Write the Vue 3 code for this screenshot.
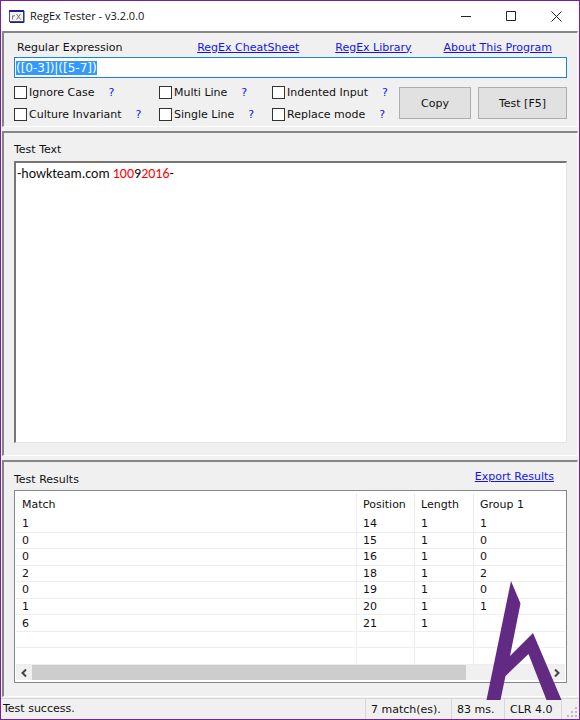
<template>
  <div class="window">
    <header class="title-bar">
      <svg class="app-icon" width="16" height="13" viewBox="0 0 16 13">
        <rect x="0.5" y="0.5" width="14" height="11" fill="#f3f1ec" stroke="#4a4a8c" />
        <path d="M0 0h15v2h-15z" fill="#1c1c9c" />
        <path d="M15 1v11.500H1" fill="none" stroke="#24246e" />
        <path d="M3.500 9.500V5.500M3.500 6.500L6 5.500M7.500 4l4 5.500M11.500 4l-4 5.500" fill="none" stroke="#77777f" />
      </svg>
      <h1 class="title">RegEx Tester - v3.2.0.0</h1>
      <div class="window-controls">
        <button type="button" aria-label="Minimize">
          <svg width="11" height="11" viewBox="0 0 11 11"><path d="M0 5.5h10" /></svg>
        </button>
        <button type="button" aria-label="Maximize">
          <svg width="11" height="11" viewBox="0 0 11 11"><path d="M0.5 0.5h9v9h-9z" /></svg>
        </button>
        <button type="button" aria-label="Close">
          <svg width="11" height="11" viewBox="0 0 11 11"><path d="M0.5 0.5l10 10M10.5 0.5l-10 10" /></svg>
        </button>
      </div>
    </header>

    <section class="panel">
      <div class="expression-head">
        <label for="regex">Regular Expression</label>
        <nav class="links">
          <a href="#cheatsheet">RegEx CheatSheet</a>
          <a href="#library">RegEx Library</a>
          <a href="#about">About This Program</a>
        </nav>
      </div>
      <input id="regex" ref="regexInput" v-model="regex" class="regex-input" type="text" spellcheck="false" />
      <div class="controls">
        <div class="options">
          <div v-for="option in options" :key="option.id" class="option">
            <input :id="option.id" v-model="option.checked" type="checkbox" />
            <label :for="option.id">{{ option.label }}</label>
            <a class="help" :href="'#help-' + option.id">?</a>
          </div>
        </div>
        <button type="button" class="btn">Copy</button>
        <button type="button" class="btn btn-test">Test [F5]</button>
      </div>
    </section>

    <section class="panel panel-text">
      <h2 id="text-label" class="caption">Test Text</h2>
      <div class="test-text" contenteditable="true" role="textbox" aria-multiline="true" aria-labelledby="text-label" spellcheck="false"><span v-for="(part, i) in testText" :key="i" :class="{ hit: part.hit }">{{ part.text }}</span></div>
    </section>

    <section class="panel panel-results">
      <div class="results-head">
        <h2 class="caption">Test Results</h2>
        <a href="#export">Export Results</a>
      </div>
      <div class="list-view">
        <table>
          <colgroup>
            <col />
            <col class="col-position" />
            <col class="col-length" />
            <col class="col-group" />
          </colgroup>
          <thead>
            <tr>
              <th>Match</th>
              <th>Position</th>
              <th>Length</th>
              <th>Group 1</th>
            </tr>
          </thead>
          <tbody>
            <tr v-for="(row, i) in results" :key="i">
              <td v-for="(cell, j) in row" :key="j">{{ cell }}</td>
            </tr>
          </tbody>
        </table>
        <div class="scrollbar">
          <button type="button" aria-label="Scroll left">
            <svg width="6" height="8" viewBox="0 0 6 8"><path d="M5 0.5L1.5 4L5 7.5" /></svg>
          </button>
          <div class="track"><div class="thumb"></div></div>
          <button type="button" aria-label="Scroll right">
            <svg width="6" height="8" viewBox="0 0 6 8"><path d="M1 0.5L4.5 4L1 7.5" /></svg>
          </button>
        </div>
      </div>
    </section>

    <footer class="status-bar">
      <span class="status-message">Test success.</span>
      <span class="status-cell cell-matches">7 match(es).</span>
      <span class="status-cell cell-time">83 ms.</span>
      <span class="status-cell cell-clr">CLR 4.0</span>
      <svg class="grip" width="12" height="12" viewBox="0 0 12 12">
        <path d="M9 1h2v2h-2zM5 5h2v2h-2zM9 5h2v2h-2zM1 9h2v2h-2zM5 9h2v2h-2zM9 9h2v2h-2z" fill="#bdbdbd" />
      </svg>
    </footer>

    <svg class="watermark" width="76" height="119" viewBox="0 0 76 119">
      <path d="M25 0L34.500 22.500L24 75L47 52L75.500 119H60.500L42.500 73L19.500 95L14.500 119H0.500Z" fill="#632a83" />
    </svg>
  </div>
</template>

<script setup>
import { ref, onMounted } from 'vue';

const regex = ref('([0-3])|([5-7])');
const regexInput = ref(null);

const options = ref([
  { id: 'ignore-case', label: 'Ignore Case', checked: false },
  { id: 'multi-line', label: 'Multi Line', checked: false },
  { id: 'indented-input', label: 'Indented Input', checked: false },
  { id: 'culture-invariant', label: 'Culture Invariant', checked: false },
  { id: 'single-line', label: 'Single Line', checked: false },
  { id: 'replace-mode', label: 'Replace mode', checked: false }
]);

const testText = [
  { text: '-howkteam.com ', hit: false },
  { text: '100', hit: true },
  { text: '9', hit: false },
  { text: '2016', hit: true },
  { text: '-', hit: false }
];

const results = [
  ['1', '14', '1', '1'],
  ['0', '15', '1', '0'],
  ['0', '16', '1', '0'],
  ['2', '18', '1', '2'],
  ['0', '19', '1', '0'],
  ['1', '20', '1', '1'],
  ['6', '21', '1', ''],
  ['', '', '', ''],
  ['', '', '', '']
];

onMounted(() => {
  regexInput.value.focus();
  regexInput.value.select();
});
</script>

<style>
body {
  margin: 0;
}
</style>

<style scoped>
.window {
  position: relative;
  box-sizing: border-box;
  min-height: 100vh;
  display: flex;
  flex-direction: column;
  border: 1px solid #7a1fa2;
  background: #f0f0f0;
  color: #111;
  font: 11px/16px Verdana, "DejaVu Sans", sans-serif;
}

button,
input {
  font: inherit;
  color: inherit;
}

a {
  color: #1414f0;
}

.title-bar {
  display: flex;
  align-items: center;
  height: 30px;
  padding-left: 8px;
  background: #fff;
}

.title {
  flex: 1;
  margin: 0 0 0 5px;
  font: 11px/16px "Segoe UI", "Open Sans", sans-serif;
}

.window-controls {
  display: flex;
}

.window-controls button {
  display: flex;
  align-items: center;
  justify-content: center;
  width: 45px;
  height: 28px;
  padding: 0;
  border: none;
  background: none;
}

.window-controls path {
  fill: none;
  stroke: #222;
}

.panel {
  display: flex;
  flex-direction: column;
  margin: 0 1px;
  padding: 0 10px;
  border: 1px solid #fff;
  border-top: 2px solid #868686;
  border-left: 2px solid #868686;
}

.expression-head {
  display: flex;
  align-items: center;
  justify-content: space-between;
  padding: 6px 15px 1px 3px;
}

.expression-head label {
  padding-top: 1px;
}

.links {
  display: flex;
  gap: 32px;
}

.links a:first-child {
  margin-right: 4px;
}

.regex-input {
  box-sizing: border-box;
  width: 100%;
  height: 21px;
  padding: 0 1px;
  border: 1px solid #1a84d8;
  outline: none;
  background: #fff;
  font-size: 12px;
}

.regex-input::selection {
  background: #3399ff;
  color: #fff;
}

.controls {
  display: flex;
  align-items: center;
  gap: 7px;
  padding: 3px 0 1px;
}

.options {
  flex: 1;
  display: grid;
  grid-template-columns: 145fr 113fr 120fr;
}

.option {
  display: flex;
  align-items: center;
  height: 22px;
  white-space: nowrap;
}

.option label,
.help {
  padding-top: 2px;
}

.option input {
  appearance: none;
  box-sizing: border-box;
  width: 13px;
  height: 13px;
  margin: 0 2px 0 0;
  border: 1px solid #333;
  background: #fff;
}

.option input:checked {
  box-shadow: inset 0 0 0 2px #fff;
  background: #333;
}

.help {
  margin-left: 14px;
  text-decoration: none;
}

.btn {
  box-sizing: border-box;
  width: 72px;
  height: 32px;
  padding: 2px 0 0;
  border: 1px solid #adadad;
  background: #e1e1e1;
}

.btn-test {
  width: 89px;
}

.panel-text {
  flex: 1;
  margin-top: 4px;
  padding-bottom: 12px;
}

.caption {
  margin: 0;
  font: inherit;
}

.panel-text .caption {
  padding: 9px 0 3px;
}

.test-text {
  flex: 1;
  padding: 2px 1px;
  border: 1px solid #e3e3e3;
  border-top: 2px solid #767676;
  border-left: 2px solid #767676;
  outline: none;
  background: #fff;
  font: 14px/18px Calibri, Carlito, "Open Sans", sans-serif;
  white-space: pre-wrap;
}

.hit {
  color: #f00;
}

.panel-results {
  margin-top: 4px;
  padding-bottom: 13px;
}

.results-head {
  display: flex;
  justify-content: space-between;
  padding: 7px 13px 2px 0;
}

.results-head .caption {
  padding-top: 3px;
}

.list-view {
  padding: 2px 1px;
  border: 1px solid #828790;
  background: #fff;
}

table {
  width: 100%;
  height: 172px;
  border-collapse: separate;
  border-spacing: 0;
  table-layout: fixed;
}

.col-position {
  width: 58px;
}

.col-length {
  width: 59px;
}

.col-group {
  width: 91px;
}

th,
td {
  height: 14px;
  padding: 1px 0 0 6px;
  border-right: 1px solid #ededed;
  line-height: 14px;
  text-align: left;
  font-weight: normal;
}

th {
  height: 21px;
  padding-bottom: 1px;
}

td {
  border-bottom: 1px solid #ededed;
}

th:last-child,
td:last-child {
  border-right: none;
}

.scrollbar {
  display: flex;
  background: #f0f0f0;
}

.scrollbar button {
  display: flex;
  align-items: center;
  justify-content: center;
  width: 16px;
  height: 15px;
  padding: 0;
  border: none;
  background: none;
}

.scrollbar path {
  fill: none;
  stroke: #444;
  stroke-width: 2;
}

.track {
  flex: 1;
}

.thumb {
  width: 84%;
  height: 100%;
  background: #cdcdcd;
}

.status-bar {
  display: flex;
  align-items: center;
  height: 20px;
  margin-top: 1px;
  padding-left: 2px;
  border-top: 1px solid #d7d7d7;
}

.status-message {
  flex: 1;
  line-height: 22px;
}

.status-cell {
  box-sizing: border-box;
  height: 20px;
  padding-left: 5px;
  border-left: 1px solid #d7d7d7;
  line-height: 22px;
}

.cell-matches {
  width: 86px;
}

.cell-time {
  width: 53px;
}

.cell-clr {
  width: 58px;
  border-right: 1px solid #d7d7d7;
}

.grip {
  align-self: flex-end;
  margin: 0 1px 1px 4px;
}

.watermark {
  position: absolute;
  right: 17px;
  bottom: 19px;
  pointer-events: none;
}
</style>
